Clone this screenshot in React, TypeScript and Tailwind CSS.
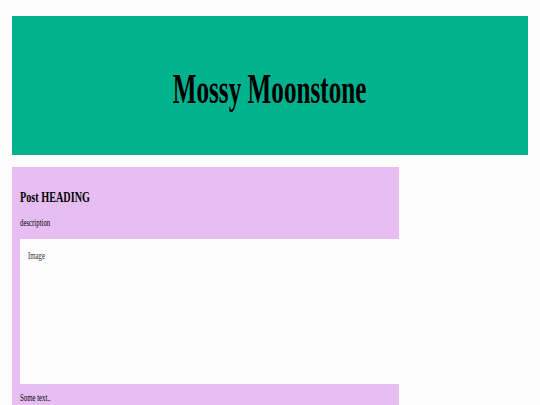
export default function App() {
  return (
    <div className="min-h-[405px] bg-[#fdfdfd] px-[12px] pt-[16px] font-['Liberation_Serif',serif] text-black">
      <header className="flex h-[139px] items-center justify-center bg-[#00b38e] pt-[6px]">
        <h1 className="inline-block origin-center scale-x-[0.6] text-[42px] font-bold leading-none">
          Mossy Moonstone
        </h1>
      </header>

      <div className="mt-[12px] w-3/4 bg-[#e6bef2] pl-[8px] pt-[22px]">
        <h2 className="h-[17px] origin-left scale-x-[0.68] text-[15px] font-bold leading-[17px] whitespace-nowrap">
          Post HEADING
        </h2>
        <p className="mt-[11px] h-[12px] origin-left scale-x-[0.68] text-[10px] leading-[12px] whitespace-nowrap">
          description
        </p>
        <div className="mt-[10px] h-[145px] bg-[#fdfdfd] pl-[8px] pt-[11px]">
          <p className="origin-left scale-x-[0.68] text-[10px] leading-[12px] text-[#333] whitespace-nowrap">
            Image
          </p>
        </div>
        <p className="h-[21px] origin-left scale-x-[0.68] pt-[8px] text-[10px] leading-[12px] whitespace-nowrap">
          Some text..
        </p>
      </div>
    </div>
  )
}
